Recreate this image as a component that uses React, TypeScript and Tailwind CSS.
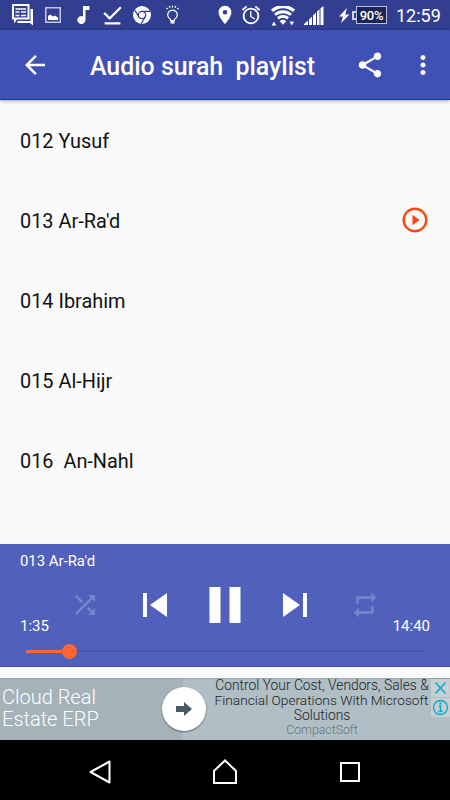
import {
  MdAlarm,
  MdArrowBack,
  MdDownloadDone,
  MdLocationOn,
  MdMoreVert,
  MdRepeat,
  MdShare,
  MdShuffle,
  MdSkipNext,
  MdSkipPrevious,
} from 'react-icons/md';

interface Surah {
  label: string;
  playing?: boolean;
}

const SURAHS: Surah[] = [
  { label: '012 Yusuf' },
  { label: "013 Ar-Ra'd", playing: true },
  { label: '014 Ibrahim' },
  { label: '015 Al-Hijr' },
  { label: '016  An-Nahl' },
];

function StatusBar() {
  return (
    <div className="flex h-[30px] shrink-0 items-center bg-[#323e90] text-white">
      {/* Notifications */}
      <svg className="ml-3 h-[22px] w-[22px]" viewBox="0 0 22 22" fill="none">
        <path d="M18.500 5H21v16.500L18 19H5.500v-2h13z" fill="#fff" />
        <path d="M1 1h15.500v13.500H4.500L3 16.500v-2H1z" stroke="#fff" strokeWidth="2" />
        <path d="M3.500 5h10.500M9 8h5M9 11.500h5M3.500 8h4M3.500 11.500h4" stroke="#fff" strokeWidth="1.600" />
      </svg>
      <svg className="ml-[11px] h-4 w-4" viewBox="0 0 16 16">
        <rect x=".75" y=".75" width="14.500" height="14.500" fill="none" stroke="#c5c9e4" strokeWidth="1.500" />
        <path d="M3 13V9l2-1.500 3 2 2-1 3 2V13z" fill="#fff" />
      </svg>
      <svg className="ml-4 h-[18px] w-[14px]" viewBox="0 0 14 18" fill="#fff">
        <path d="M6 0h6.500v4H8.500v10a4.100 4 0 1 1-2.500-3.600z" />
      </svg>
      <MdDownloadDone className="ml-[8px] h-[27px] w-[27px]" />
      <svg className="ml-[7px] h-[18px] w-[18px]" viewBox="0 0 18 18">
        <circle cx="9" cy="9" r="9" fill="#fff" />
        <circle cx="9" cy="9" r="3.700" fill="none" stroke="#323e90" strokeWidth="1.300" />
        <path d="M9 5.300h8M5.800 10.900L1.800 4M12.200 10.900L8.200 17.800" stroke="#323e90" strokeWidth="1.200" />
      </svg>
      <svg className="ml-[15px] h-[20px] w-[13px]" viewBox="0 0 13 20" fill="none" stroke="#fff" strokeWidth="1.200">
        <path d="M4.500 15.500v-1.300a4.800 4.800 0 1 1 4 0v1.300z" />
        <path d="M4.500 17.300h4" strokeWidth="2.500" />
        <path d="M6.500 .5v2M3.300 1l.8 1.800M9.700 1l-.8 1.800M.5 3l1.200 1.200M12.500 3l-1.200 1.200" />
      </svg>

      {/* System */}
      <MdLocationOn className="ml-[35px] h-[22px] w-[22px]" />
      <MdAlarm className="ml-1 h-[22px] w-[22px]" />
      <svg className="mt-[2px] ml-[9px] h-[20px] w-6" viewBox="0 0 24 20" fill="none" stroke="#fff">
        <path d="M1 4.800a16.500 16.500 0 0 1 22 0" strokeWidth="3.200" />
        <path d="M4 8.800a12 12 0 0 1 16 0M6.900 12.400a7.500 7.500 0 0 1 10.200 0" strokeWidth="2.800" />
        <path d="M8.800 15.200a4.500 4.500 0 0 1 6.400 0L12 18.800z" fill="#fff" stroke="none" />
        <path d="M.6 19.500h4.600L2.900 15.500zM18.500 15.500H23L20.800 19.500z" fill="#fff" stroke="none" />
      </svg>
      <svg className="ml-[9px] h-[19px] w-5" viewBox="0 0 20 19" fill="#fff">
        <path d="M0 19v-1l4-3.500V19zM5 19v-5.500l3-3V19zM9 19V9.500l3-3V19zM13 19V5.500l2.500-2.300V19zM16.500 19V2.300L19.500 0v19z" />
      </svg>
      <svg className="ml-[15px] h-[15px] w-[11px]" viewBox="0 0 11 15" fill="#fff">
        <path d="M8 0L0 8.500h4L2 15l8.500-8.500H6.300z" />
      </svg>
      <div className="ml-[2px] flex items-center">
        <div className="h-[9px] w-[4px] border-2 border-r-0 border-[#cfd2e6]" />
        <div className="flex h-[18px] w-[31px] items-center justify-center border-[1.5px] border-[#b9bedb] bg-[#1d2555] text-[13px] leading-none font-medium tracking-[-0.3px]">90%</div>
      </div>
      <span className="ml-[9px] pt-px text-[18px] leading-none">12:59</span>
    </div>
  );
}

function Toolbar() {
  return (
    <header className="relative z-10 flex h-[70px] shrink-0 items-center border-b border-[#1038a4] bg-[#3f51b5] text-white shadow-[0_1px_4px_rgba(0,0,0,0.35)]">
      <MdArrowBack className="ml-5 h-[30px] w-[30px]" />
      <h1 className="ml-10 w-[265px] pt-[5px] text-[24.9px] leading-none font-medium whitespace-pre">Audio surah  playlist</h1>
      <MdShare className="h-[30px] w-[30px]" />
      <MdMoreVert className="ml-[23px] h-[30px] w-[30px]" />
    </header>
  );
}

function PlayingIcon() {
  return (
    <svg className="h-[30px] w-[30px]" viewBox="0 0 30 30">
      <circle cx="15" cy="15" r="11.300" fill="none" stroke="#f9480d" strokeWidth="2.400" />
      <path d="M12.500 9.800v10.400l7-5.200z" fill="#f9480d" />
    </svg>
  );
}

function Player() {
  return (
    <section className="flex h-[123px] shrink-0 flex-col border-b border-[#3c4bab] bg-[#5161bb] text-white">
      <div className="mt-[7px] px-5 text-[14.9px] leading-5">013 Ar-Ra'd</div>
      <div className="mt-[10px] flex h-12 items-center pl-[70px]">
        <MdShuffle className="h-[30px] w-[30px] text-[#7985cb]" />
        <MdSkipPrevious className="ml-[31px] h-12 w-12" />
        <svg className="ml-[30px] h-9 w-8" viewBox="0 0 32 36" fill="#fff">
          <rect x=".5" width="11" height="36" />
          <rect x="20.500" width="11" height="36" />
        </svg>
        <MdSkipNext className="ml-[30px] h-12 w-12" />
        <MdRepeat className="ml-[31px] h-[30px] w-[30px] text-[#7985cb]" />
      </div>
      <div className="-mt-[13px] flex justify-between px-5 text-[15px] leading-5">
        <span>1:35</span>
        <span>14:40</span>
      </div>
      <div className="mt-[7px] flex h-4 items-center pl-[26px]">
        <div className="h-[3px] w-9 bg-[#ff6633]" />
        <div className="h-[15px] w-[15px] rounded-full bg-[#ff6633]" />
        <div className="h-[2px] w-[347px] bg-[#4857a5]" />
      </div>
    </section>
  );
}

function AdBanner() {
  return (
    <div className="relative mt-[11px] flex h-[62px] shrink-0 overflow-hidden border-t border-[#98a5ab] bg-[#b0bec5] font-light">
      <div className="w-[183px] shrink-0 bg-[#a5b2b9] pt-[7px] pl-[2px] text-[20px] leading-[22px] text-white">
        Cloud Real
        <br />
        Estate ERP
      </div>
      <div className="z-10 mt-2 -ml-[21px] flex h-11 w-11 shrink-0 items-center justify-center rounded-full bg-white shadow-[0_1px_2px_rgba(0,0,0,0.45)]">
        <svg className="h-[14px] w-4" viewBox="0 0 16 14" fill="#455a64">
          <path d="M0 4h8V0l8 7-8 7v-4H0z" />
        </svg>
      </div>
      <div className="-mt-px ml-[8px] w-[216px] text-center text-[13.8px] leading-[15px] whitespace-nowrap text-[#222]">
        <div>Control Your Cost, Vendors, Sales &amp;</div>
        <div className="-ml-px text-[13.7px]">Financial Operations With Microsoft</div>
        <div>Solutions</div>
        <div className="text-[12.3px] text-[#66747b]">CompactSoft</div>
      </div>
      <div className="absolute top-0 right-0 flex w-[19px] flex-col gap-px">
        <svg className="h-[18px] w-[19px] bg-[#c8ced1]" viewBox="0 0 19 18" stroke="#00aecd" strokeWidth="1.500">
          <path d="M4.500 3.500l10 11M14.500 3.500l-10 11" />
        </svg>
        <svg className="h-[19px] w-[19px] bg-[#c8ced1]" viewBox="0 0 19 19" fill="none" stroke="#00aecd">
          <circle cx="9.500" cy="9.500" r="7" strokeWidth="1.300" />
          <path d="M8 8h1.500v5.500M7.500 13.500h4" strokeWidth="1.500" />
          <path d="M9.500 4.500v2" strokeWidth="2" />
        </svg>
      </div>
    </div>
  );
}

function NavBar() {
  return (
    <nav className="flex h-[60px] shrink-0 items-center bg-black pt-1 pl-[88px]">
      <svg className="h-6 w-6" viewBox="0 0 24 24" fill="none" stroke="#fff" strokeWidth="2" strokeLinejoin="round">
        <path d="M21.500 1.500v21L2.500 12z" />
      </svg>
      <svg className="ml-[100px] h-[26px] w-[26px]" viewBox="0 0 26 26" fill="none" stroke="#fff" strokeWidth="2">
        <path d="M2 24V12L13 1.500 24 12v12z" />
      </svg>
      <svg className="ml-[102px] h-5 w-5" viewBox="0 0 20 20" fill="none" stroke="#fff" strokeWidth="2">
        <rect x="1" y="1" width="18" height="18" />
      </svg>
    </nav>
  );
}

export default function App() {
  return (
    <div className="flex h-[800px] w-[450px] flex-col overflow-hidden bg-[#fafafa] font-['Roboto',sans-serif]">
      <StatusBar />
      <Toolbar />
      <ul className="h-[444px] shrink-0 overflow-hidden text-[19.9px] text-[#111]">
        {SURAHS.map((s) => (
          <li key={s.label} className="flex h-20 items-center justify-between px-5">
            <span className="pt-[4px] whitespace-pre">{s.label}</span>
            {s.playing && <PlayingIcon />}
          </li>
        ))}
      </ul>
      <Player />
      <AdBanner />
      <NavBar />
    </div>
  );
}
